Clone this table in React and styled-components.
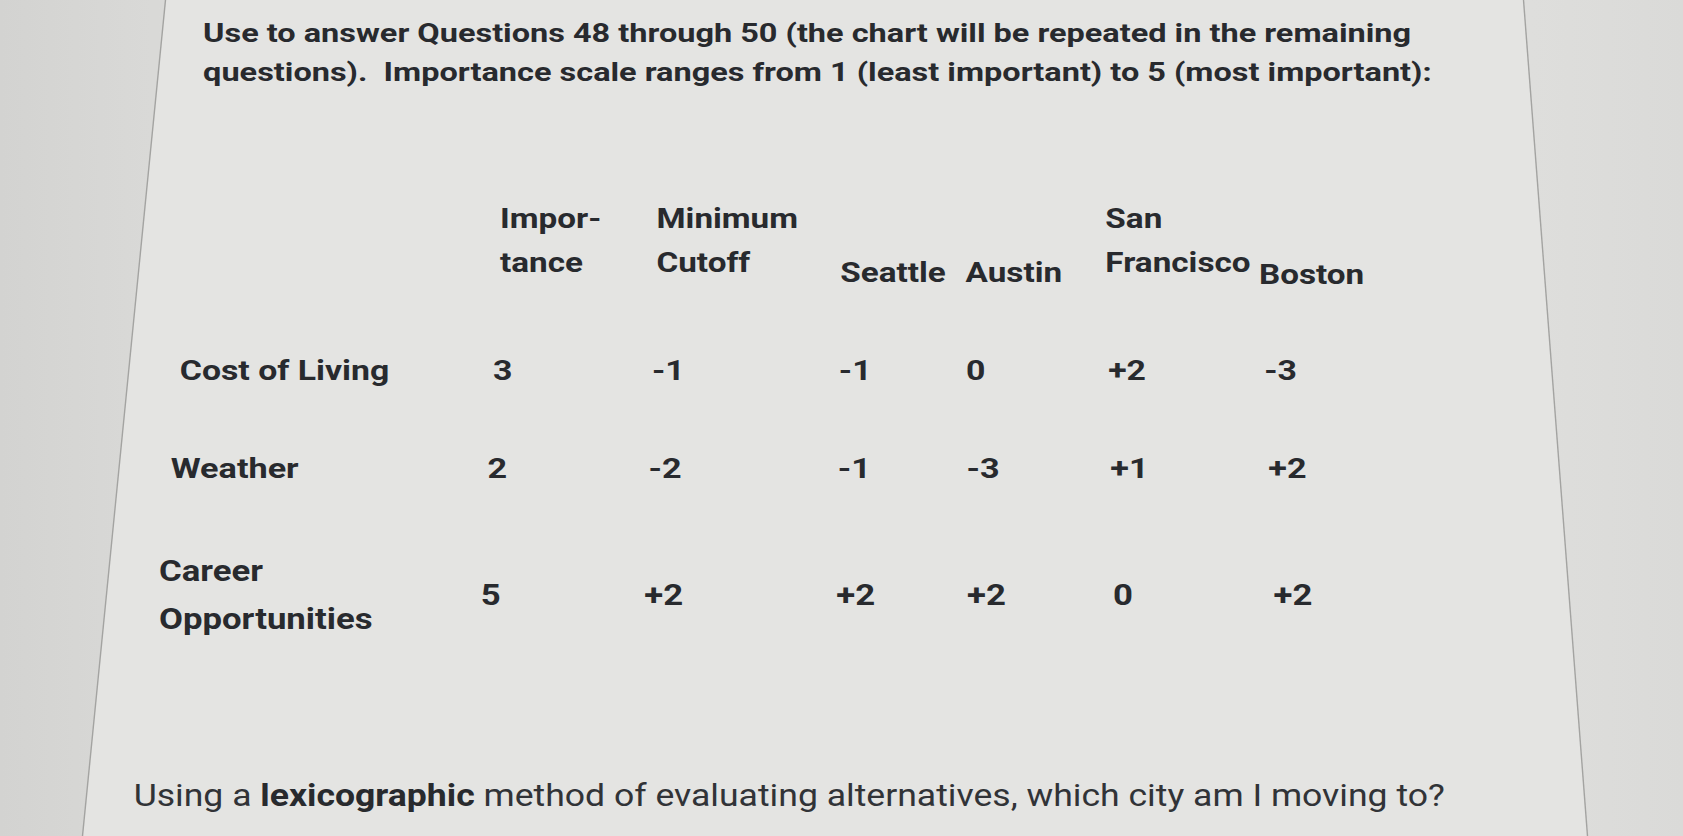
import React from 'react';
import styled, { createGlobalStyle, css } from 'styled-components';

const COLS = '315px 160px 188px 128px 143px 157px 1fr';

const Global = createGlobalStyle`
  html, body { margin: 0; padding: 0; }
  body {
    background: #d8d8d6;
    font-family: Roboto, "Noto Sans", "Liberation Sans", Arial, sans-serif;
    color: #282a2e;
  }
`;

/* each band of the photographed page is seen at its own scale */
const warp = css`
  transform-origin: 50% ${(p) => (p.$pivot != null ? `${p.$pivot}px` : '50%')};
  transform: translateX(${(p) => p.$dx}px) scale(${(p) => p.$sx}, ${(p) => p.$sy});
`;

const Screen = styled.main`
  width: 100%;
  height: 836px;
  overflow: hidden;
  background: linear-gradient(90deg, #d3d3d1 0%, #d9d9d7 9%, #dededc 91%, #dadad8 100%);
`;

const Frame = styled.div`
  height: 100%;
  background: #a3a3a1;
  clip-path: polygon(164.8px 0, 1524.2px 0, 1588.2px 836px, 81.8px 836px);
`;

const Sheet = styled.section`
  box-sizing: border-box;
  height: 100%;
  padding: 0 172px 0 169px;
  background: #e4e4e2;
  clip-path: polygon(166.2px 0, 1522.8px 0, 1586.8px 836px, 83.2px 836px);
  display: flex;
  flex-direction: column;
`;

const Prompt = styled.p`
  margin: 2px 0 0;
  font-size: 34px;
  font-weight: 700;
  line-height: 51px;
  white-space: nowrap;
  ${warp}
`;

const Table = styled.div`
  display: flex;
  flex-direction: column;
  gap: 43.5px;
  margin-top: 82px;
`;

const HeaderRow = styled.div`
  box-sizing: border-box;
  display: grid;
  grid-template-columns: ${COLS};
  grid-template-rows: 113px;
  align-items: start;
  height: 113px;
  padding-left: 6.5px;
  ${warp}
`;

const HeadCell = styled.div`
  font-size: 34px;
  font-weight: 700;
  line-height: 55px;
  white-space: nowrap;
  padding-top: ${(p) => p.$drop || 0}px;
`;

const Row = styled.div`
  box-sizing: border-box;
  display: grid;
  grid-template-columns: ${COLS};
  align-items: center;
  padding-left: 6.5px;
  ${warp}
`;

const Label = styled.div`
  font-size: 34px;
  font-weight: 700;
  line-height: 55px;
  white-space: nowrap;
`;

const Value = styled.div`
  font-size: 34px;
  font-weight: 700;
  line-height: 55px;
  white-space: nowrap;
`;

const Question = styled.p`
  margin: 120px 0 0;
  font-size: 34px;
  font-weight: 400;
  line-height: 51px;
  color: #313337;
  white-space: nowrap;
  ${warp}

  b {
    font-weight: 700;
    color: #282a2e;
  }
`;

const headers = [
  { text: '', drop: 0 },
  { text: ['Impor-', 'tance'], drop: 0 },
  { text: ['Minimum', 'Cutoff'], drop: 0 },
  { text: 'Seattle', drop: 68 },
  { text: 'Austin', drop: 68 },
  { text: ['San', 'Francisco'], drop: 0 },
  { text: 'Boston', drop: 71 },
];

const rows = [
  { label: ['Cost of Living'], values: ['3', '-1', '-1', '0', '+2', '-3'], sx: 0.994, sy: 0.815, dx: 0.3 },
  { label: ['Weather'], values: ['2', '-2', '-1', '-3', '+1', '+2'], sx: 1.006, sy: 0.836, dx: -0.8 },
  {
    label: ['Career', 'Opportunities'],
    values: ['5', '+2', '+2', '+2', '0', '+2'],
    sx: 1.0216,
    sy: 0.861,
    dx: -2.2,
  },
];

const Lines = ({ parts }) =>
  parts.map((p, i) => (
    <React.Fragment key={i}>
      {i > 0 && <br />}
      {p}
    </React.Fragment>
  ));

export default function App() {
  return (
    <>
      <Global />
      <Screen>
        <Frame>
          <Sheet>
            <Prompt $sx={0.955} $sy={0.753} $dx={3.9}>
              Use to answer Questions 48 through 50 (the chart will be repeated in the remaining
              <br />
              questions).{'\u00a0'} Importance scale ranges from 1 (least important) to 5 (most important):
            </Prompt>
            <Table>
              <HeaderRow $sx={0.978} $sy={0.79} $dx={1.8} $pivot={55}>
                {headers.map((h, i) => (
                  <HeadCell key={i} $drop={h.drop}>
                    {Array.isArray(h.text) ? <Lines parts={h.text} /> : h.text}
                  </HeadCell>
                ))}
              </HeaderRow>
              {rows.map((r, i) => (
                <Row key={i} $sx={r.sx} $sy={r.sy} $dx={r.dx}>
                  <Label>
                    <Lines parts={r.label} />
                  </Label>
                  {r.values.map((v, j) => (
                    <Value key={j}>{v}</Value>
                  ))}
                </Row>
              ))}
            </Table>
            <Question $sx={1.046} $sy={0.898} $dx={-4.5}>
              Using a <b>lexicographic</b> method of evaluating alternatives, which city am I moving to?
            </Question>
          </Sheet>
        </Frame>
      </Screen>
    </>
  );
}
